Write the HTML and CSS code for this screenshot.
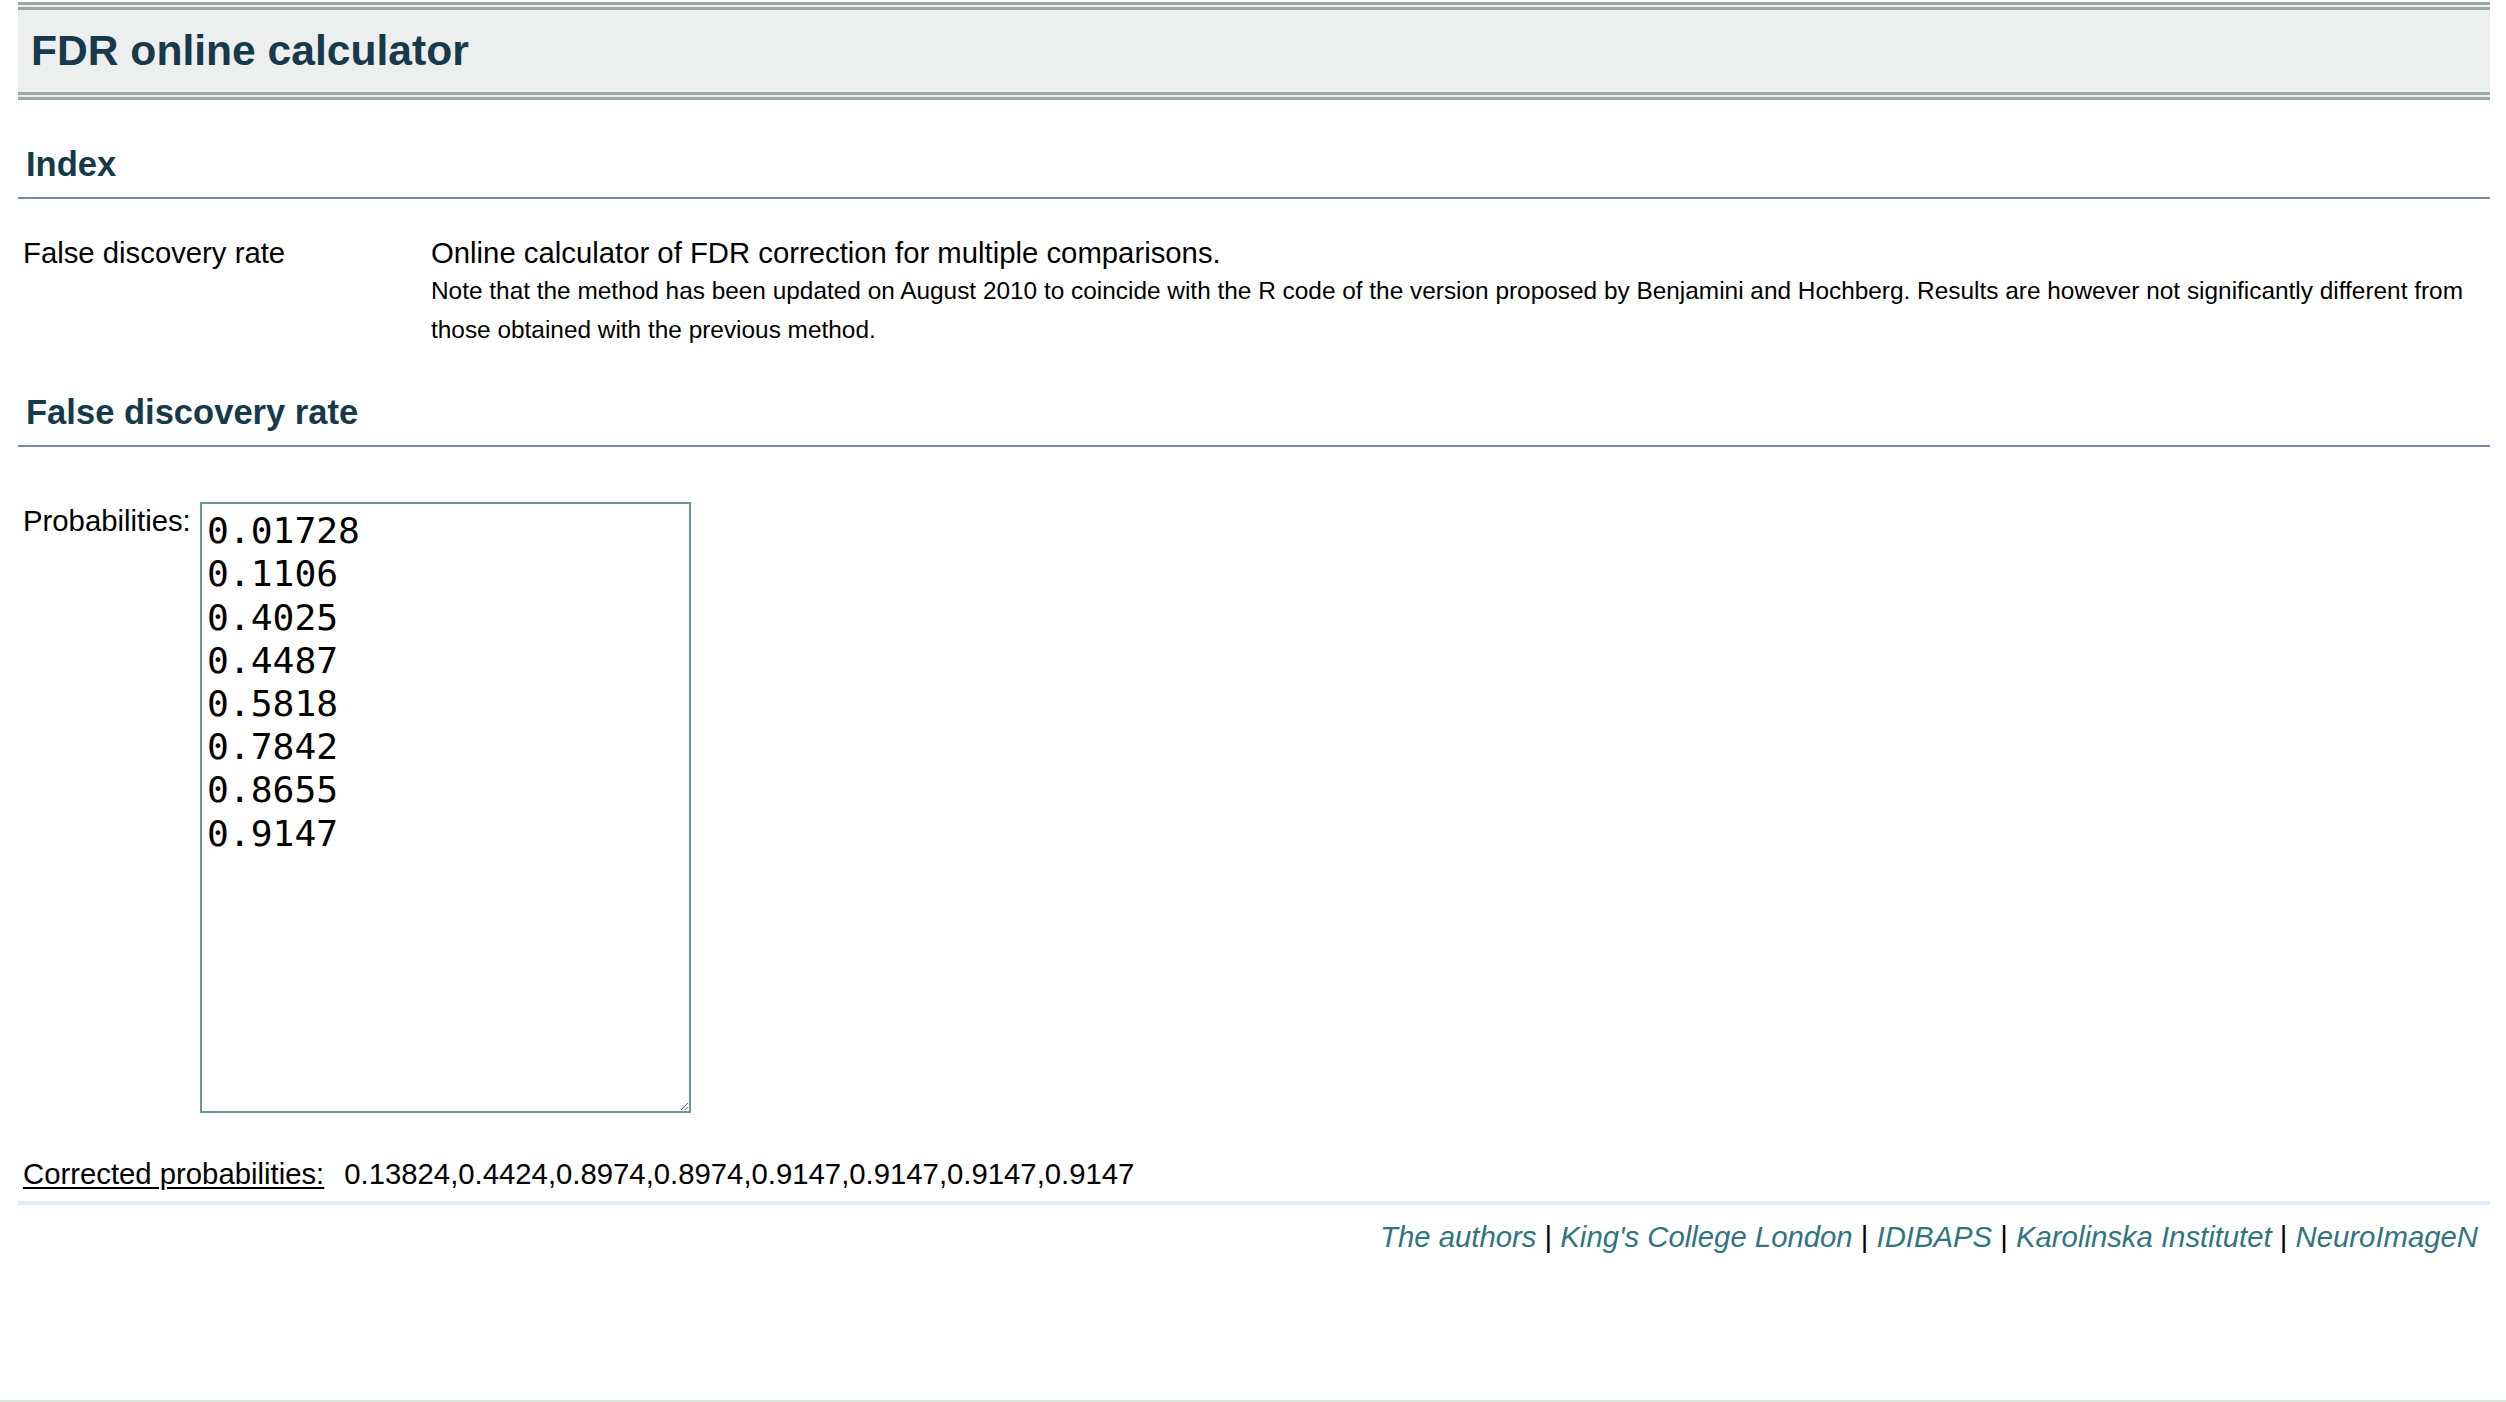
FILE: index.html
```html
<!DOCTYPE html>
<html lang="en">
<head>
<meta charset="utf-8">
<title>FDR online calculator</title>
<link rel="stylesheet" href="styles.css">
</head>
<body>
<div class="header"><h1 class="title">FDR online calculator</h1></div>

<h2 class="section">Index</h2>
<div class="index-row">
  <div class="index-label">False discovery rate</div>
  <div class="index-desc">
    <div class="desc-main">Online calculator of FDR correction for multiple comparisons.</div>
    <div class="desc-note">Note that the method has been updated on August 2010 to coincide with the R code of the version proposed by Benjamini and Hochberg. Results are however not significantly different from those obtained with the previous method.</div>
  </div>
</div>

<h2 class="section section-second">False discovery rate</h2>
<form class="calc">
  <div class="prob-row">
    <label class="prob-label" for="probs">Probabilities:</label>
    <textarea class="prob-input" id="probs" spellcheck="false">0.01728
0.1106
0.4025
0.4487
0.5818
0.7842
0.8655
0.9147</textarea>
  </div>
  <div class="result-row">
    <span class="result-label">Corrected probabilities:</span>
    <span class="result-values">0.13824,0.4424,0.8974,0.8974,0.9147,0.9147,0.9147,0.9147</span>
  </div>
</form>

<div class="footer">
  <a class="flink" href="#">The authors</a> <span class="sep">|</span> <a class="flink" href="#">King's College London</a> <span class="sep">|</span> <a class="flink" href="#">IDIBAPS</a> <span class="sep">|</span> <a class="flink" href="#">Karolinska Institutet</a> <span class="sep">|</span> <a class="flink" href="#">NeuroImageN</a>
</div>
</body>
</html>
```

FILE: styles.css
```css
html {
  background: #ffffff;
}

* {
  box-sizing: border-box;
}

body {
  margin: 0;
  min-height: 100vh;
  padding: 2px 16px 0 18px;
  border-bottom: 2px solid #dde3d9;
  font-family: "Liberation Sans", Arial, Helvetica, sans-serif;
  font-size: 29.3px;
  line-height: 38.4px;
  color: #000000;
  background: #ffffff;
}

.header {
  background: #edefee;
  border-top: 8px double #9aa8a8;
  border-bottom: 8px double #9aa8a8;
}

.title {
  margin: 0;
  padding-left: 13px;
  height: 82px;
  font-size: 42.6px;
  line-height: 80px;
  font-weight: bold;
  color: #173a4a;
}

.section {
  margin: 44px 0 0 0;
  padding: 0 0 13px 8px;
  font-size: 34.56px;
  line-height: 40px;
  font-weight: bold;
  color: #173a4a;
  border-bottom: 2px solid #7b8aa3;
}

.section-second {
  margin-top: 43px;
}

.index-row {
  display: flex;
  margin-top: 35px;
  padding: 0 8px 0 5px;
}

.index-label {
  flex: 0 0 408px;
}

.index-desc {
  flex: 1 1 auto;
}

.desc-note {
  font-size: 24.4px;
  line-height: 38.4px;
}

.calc {
  margin: 0;
  padding-left: 5px;
}

.prob-row {
  display: flex;
  align-items: flex-start;
  margin-top: 55px;
}

.prob-label {
  flex: 0 0 177px;
}

.prob-input {
  display: block;
  width: 491px;
  height: 611px;
  margin: 0;
  padding: 5px 2px 2px 5px;
  border: 2px solid #6a9699;
  border-radius: 0;
  background: #ffffff;
  color: #000000;
  font-family: "DejaVu Sans Mono", "Liberation Mono", monospace;
  font-size: 36.3px;
  line-height: 43.2px;
  outline: none;
}

.result-row {
  display: flex;
  margin-top: 42px;
}

.result-label {
  text-decoration: underline;
  text-underline-offset: 3px;
}

.result-values {
  margin-left: 20px;
}

.footer {
  margin-top: 7px;
  padding: 13px 12px 0 0;
  border-top: 4px solid #dfebfb;
  text-align: right;
}

.flink {
  color: #2f7480;
  font-style: italic;
  text-decoration: none;
}

.sep {
  color: #000000;
}
```
